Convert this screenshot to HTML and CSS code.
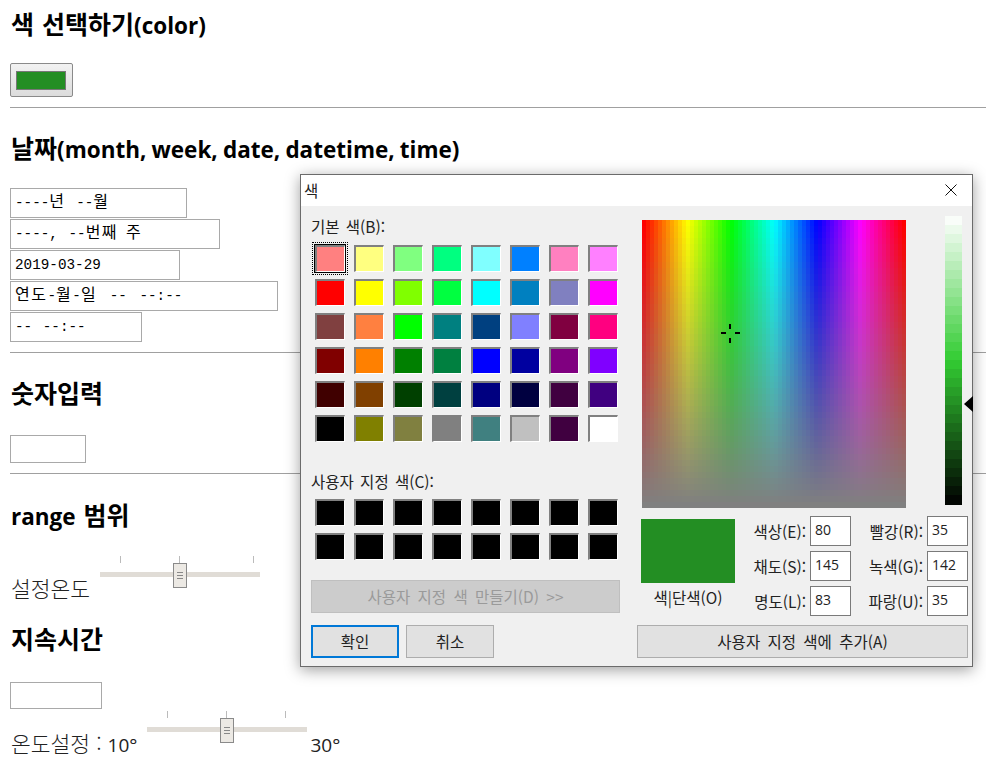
FILE: index.html
```html
<!DOCTYPE html>
<html lang="ko">
<head>
    <meta charset="UTF-8">
    <meta name="viewport" content="width=device-width, initial-scale=1.0">
    <title>input types</title>
    <link rel="stylesheet" href="styles.css">
</head>
<body>
    <h2 class="title title-first">색 선택하기<span class="en">(color)</span></h2>
    <button class="color-btn"><span class="color-btn-fill"></span></button>
    <hr>

    <h2 class="title title-dates">날짜<span class="en">(month, week, date, datetime, time)</span></h2>
    <div class="date-list">
        <div class="field month">----<span class="ko">년</span> --<span class="ko">월</span></div>
        <div class="field week">----, --<span class="ko">번째 주</span></div>
        <div class="field date">2019-03-29</div>
        <div class="field datetime"><span class="ko">연도</span>-<span class="ko">월</span>-<span class="ko">일</span> -- --:--</div>
        <div class="field time">-- --:--</div>
    </div>
    <hr>

    <h2 class="title">숫자입력</h2>
    <div class="field number"></div>
    <hr>

    <h2 class="title title-range"><span class="en">range</span> 범위</h2>
    <div class="range-row">
        <span class="range-label">설정온도</span>
        <div class="slider slider-a">
            <i class="tick t1"></i><i class="tick t2"></i><i class="tick t3"></i>
            <div class="track"></div>
            <div class="thumb"></div>
        </div>
    </div>

    <h2 class="title title-time">지속시간</h2>
    <div class="field duration"></div>
    <div class="range-row range-row-b">
        <span class="range-label">온도설정 : <span class="num">10°</span></span>
        <div class="slider slider-b">
            <i class="tick t1"></i><i class="tick t2"></i><i class="tick t3"></i>
            <div class="track"></div>
            <div class="thumb"></div>
        </div>
        <span class="range-label range-end num">30°</span>
    </div>

    <!-- windows color dialog, sits on top of the page -->
    <div class="dialog">
        <div class="dialog-title">
            <span>색</span>
            <svg class="close" width="12" height="12" viewBox="0 0 12 12"><path d="M0.5 0.5L11.5 11.5M11.5 0.5L0.5 11.5" stroke="#111" fill="none"/></svg>
        </div>
        <div class="dialog-body">
            <div class="col-left">
                <div class="dlg-label basic-label">기본 색(B):</div>
                <div class="swatches" id="basic-colors"></div>
                <div class="dlg-label custom-label">사용자 지정 색(C):</div>
                <div class="swatches custom" id="custom-colors"></div>
                <div class="dlg-btn disabled">사용자 지정 색 만들기(D) &gt;&gt;</div>
                <div class="btn-row">
                    <div class="dlg-btn primary">확인</div>
                    <div class="dlg-btn cancel">취소</div>
                </div>
            </div>
            <div class="col-right">
                <div class="picker-row">
                    <div class="spectrum">
                        <canvas id="spectrum" width="264" height="288"></canvas>
                        <svg class="cross" width="20" height="20" viewBox="0 0 20 20"><path d="M8 0h2v5H8zM8 14h2v5H8zM0 8h5v2H0zM14 8h5v2h-5z" fill="#000"/></svg>
                    </div>
                    <div class="lum">
                        <canvas id="lum" width="17" height="289"></canvas>
                        <svg class="lum-arrow" width="9" height="16" viewBox="0 0 9 16"><path d="M0 8L9 0V16Z" fill="#000"/></svg>
                    </div>
                </div>
                <div class="values-row">
                    <div class="preview-col">
                        <div class="preview"></div>
                        <div class="preview-label">색|단색(O)</div>
                    </div>
                    <div class="values">
                        <label class="value"><span>색상(E):</span><b>80</b></label>
                        <label class="value"><span>빨강(R):</span><b>35</b></label>
                        <label class="value"><span>채도(S):</span><b>145</b></label>
                        <label class="value"><span>녹색(G):</span><b>142</b></label>
                        <label class="value"><span>명도(L):</span><b>83</b></label>
                        <label class="value"><span>파랑(U):</span><b>35</b></label>
                    </div>
                </div>
                <div class="dlg-btn add">사용자 지정 색에 추가(A)</div>
            </div>
        </div>
    </div>

    <script src="script.js"></script>
</body>
</html>
```

FILE: styles.css
```css
body {
    margin: 0 0 0 10px;
    height: 767px;
    overflow: hidden;
    color: #000;
    background: #fff;
    font-family: "Noto Sans CJK KR", sans-serif;
}

hr {
    height: 1px;
    margin: 10px 0 0 0;
    border: 0;
    background: #a0a0a0;
}

.title {
    height: 30px;
    margin: 26px 0 26px 1px;
    font-size: 25px;
    line-height: 26px;
    font-weight: 700;
    word-spacing: 1px;
}

.title .en {
    font-family: "Open Sans", sans-serif;
    font-size: 22.5px;
    word-spacing: -0.7px;
}

.title-first { margin-top: 10px; margin-bottom: 23px; }
.title-dates { margin-bottom: 24px; }
.title-range { margin-top: 27px; margin-bottom: 25px; }
.title-time { margin-top: 22px; margin-bottom: 27px; }

/* color input */
.color-btn {
    display: flex;
    align-items: center;
    justify-content: center;
    width: 63px;
    height: 34px;
    padding: 0 1px 0 0;
    border: 1px solid #8a8a8a;
    border-radius: 2px;
    background: linear-gradient(#f2f2f2, #dcdcdc);
}

.color-btn-fill {
    width: 50px;
    height: 19px;
    border: 1px solid #777;
    box-sizing: border-box;
    background: #238e23;
}

/* text-like inputs */
.date-list {
    display: flex;
    flex-direction: column;
    align-items: flex-start;
    gap: 1px;
}

.field {
    box-sizing: border-box;
    height: 30px;
    padding-left: 4px;
    border: 1px solid #a9a9a9;
    font-family: "Liberation Mono", "Noto Sans CJK KR", monospace;
    font-size: 14.3px;
    line-height: 28px;
    word-spacing: 2px;
    white-space: pre;
}

.field .ko {
    font-family: "Noto Sans CJK KR", sans-serif;
    font-size: 16px;
    line-height: 20px;
    letter-spacing: 1.5px;
}

.month { width: 177px; }
.week { width: 210px; }
.date { width: 170px; }
.datetime { width: 268px; word-spacing: 4px; }
.time { width: 132px; }
.number { width: 76px; height: 28px; }
.duration { width: 92px; height: 27px; }

/* range inputs */
.range-row {
    display: flex;
    align-items: flex-start;
    height: 47px;
}

.range-row-b {
    height: 49px;
    margin-top: 2px;
}

.range-label {
    align-self: flex-end;
    margin-left: 1px;
    color: #222;
    font-size: 21.5px;
    font-weight: 300;
    line-height: 30px;
}

.num {
    font-family: "Open Sans", sans-serif;
    font-size: 19px;
    font-weight: 400;
}

.range-end { margin-left: 3px; }

.slider {
    position: relative;
    width: 160px;
    height: 33px;
    margin-left: 10px;
}

.track {
    position: absolute;
    left: 0;
    right: 0;
    top: 16px;
    height: 5px;
    background: #e0dcd6;
}

.thumb {
    position: absolute;
    left: 73px;
    top: 7px;
    box-sizing: border-box;
    width: 14px;
    height: 25px;
    border: 1px solid #8a8a8a;
    background: #ece9e4;
}

.thumb::after {
    content: "";
    position: absolute;
    left: 3px;
    top: 8px;
    width: 6px;
    height: 5px;
    border-top: 1px solid #888;
    border-bottom: 1px solid #888;
    background: linear-gradient(#888, #888) center / 100% 1px no-repeat;
}

.tick {
    position: absolute;
    top: 0;
    width: 1px;
    height: 7px;
    background: #bbb;
}

.slider-a .t1 { left: 20px; }
.slider-a .t2 { left: 79px; }
.slider-a .t3 { left: 153px; }
.slider-b .t1 { left: 20px; }
.slider-b .t2 { left: 79px; }
.slider-b .t3 { left: 138px; }

/* dialog */
.dialog {
    position: absolute;
    left: 300px;
    top: 174px;
    box-sizing: border-box;
    width: 673px;
    height: 493px;
    border: 1px solid #6b6b6b;
    background: #f0f0f0;
    box-shadow: 0 3px 14px rgba(0, 0, 0, 0.38);
    font-size: 15.5px;
    color: #222;
}

.dialog-title {
    display: flex;
    align-items: center;
    justify-content: space-between;
    box-sizing: border-box;
    height: 31px;
    padding: 0 15px 2px 3px;
    background: #fff;
}

.dialog-body {
    display: flex;
}

.col-left {
    width: 309px;
    margin-left: 10px;
}

.col-right {
    width: 331px;
    margin-left: 17px;
}

.dlg-label {
    height: 20px;
    line-height: 20px;
    word-spacing: 2px;
}

.basic-label { margin-top: 10px; }
.custom-label { margin-top: 29px; }

.swatches {
    display: grid;
    grid-template-columns: repeat(8, 30px);
    grid-auto-rows: 27px;
    gap: 7px 9px;
    margin: 9px 0 0 4px;
}

.swatches.custom { margin-top: 8px; }

.swatch {
    box-sizing: border-box;
    border-top: 2px solid #808080;
    border-left: 2px solid #808080;
    border-right: 1px solid #fff;
    border-bottom: 1px solid #fff;
}

.swatch.selected {
    box-shadow: 0 0 0 1px #000, 0 0 0 2px #f0f0f0;
    outline: 1px dotted #000;
    outline-offset: 2px;
}

.dlg-btn {
    box-sizing: border-box;
    height: 33px;
    border: 1px solid #adadad;
    background: #e1e1e1;
    text-align: center;
    line-height: 31px;
    word-spacing: 3px;
}

.disabled {
    margin-top: 20px;
    border-color: #bfbfbf;
    background: #cccccc;
    color: #9a9a9a;
}

.btn-row {
    display: flex;
    gap: 7px;
    margin-top: 12px;
}

.primary, .cancel { width: 88px; }

.primary {
    border: 2px solid #0078d7;
    line-height: 29px;
}

.picker-row {
    display: flex;
    height: 302px;
    padding-left: 5px;
}

.spectrum {
    position: relative;
    width: 264px;
    height: 288px;
    margin-top: 14px;
}

.spectrum canvas, .lum canvas { display: block; }

.cross {
    position: absolute;
    left: 79px;
    top: 104px;
}

.lum {
    position: relative;
    width: 17px;
    height: 289px;
    margin: 10px 0 0 39px;
}

.lum-arrow {
    position: absolute;
    left: 19px;
    top: 180px;
}

.values-row {
    display: flex;
    margin-top: 8px;
}

.preview-col {
    width: 94px;
    margin-left: 4px;
}

.preview {
    height: 64px;
    margin-top: 3px;
    background: #238e23;
}

.preview-label {
    margin-top: 4px;
    text-align: center;
    line-height: 20px;
}

.values {
    display: grid;
    grid-template-columns: 106px 106px;
    grid-auto-rows: 30px;
    gap: 5px 11px;
    margin-left: 10px;
}

.value {
    display: flex;
    align-items: center;
    justify-content: flex-end;
    gap: 4px;
    white-space: nowrap;
}

.value b {
    box-sizing: border-box;
    width: 41px;
    height: 30px;
    padding-left: 4px;
    border: 1px solid #7a7a7a;
    background: #fff;
    font-family: "Open Sans", sans-serif;
    font-size: 14px;
    font-weight: 400;
    line-height: 26px;
}

.add { margin-top: 9px; }
```

FILE: script.js
```js
// classic windows palette, row by row
const basicColors = [
    '#ff8080', '#ffff80', '#80ff80', '#00ff80', '#80ffff', '#0080ff', '#ff80c0', '#ff80ff',
    '#ff0000', '#ffff00', '#80ff00', '#00ff40', '#00ffff', '#0080c0', '#8080c0', '#ff00ff',
    '#804040', '#ff8040', '#00ff00', '#008080', '#004080', '#8080ff', '#800040', '#ff0080',
    '#800000', '#ff8000', '#008000', '#008040', '#0000ff', '#0000a0', '#800080', '#8000ff',
    '#400000', '#804000', '#004000', '#004040', '#000080', '#000040', '#400040', '#400080',
    '#000000', '#808000', '#808040', '#808080', '#408080', '#c0c0c0', '#400040', '#ffffff'
];

function addSwatches(containerId, colors) {
    const container = document.getElementById(containerId);
    colors.forEach((color, index) => {
        const swatch = document.createElement('div');
        swatch.className = 'swatch';
        swatch.style.backgroundColor = color;
        if (containerId === 'basic-colors' && index === 0) {
            swatch.classList.add('selected');
        }
        container.appendChild(swatch);
    });
}

addSwatches('basic-colors', basicColors);
addSwatches('custom-colors', new Array(16).fill('#000000'));

// hue across, saturation down, in small blocks like the real dialog
const spectrum = document.getElementById('spectrum').getContext('2d');
const blockW = 4;
const blockH = 6;
for (let x = 0; x < 264; x += blockW) {
    for (let y = 0; y < 288; y += blockH) {
        const hue = 360 * x / 260;
        const sat = 100 * (1 - y / 282);
        spectrum.fillStyle = `hsl(${hue}, ${sat}%, 50%)`;
        spectrum.fillRect(x, y, blockW, blockH);
    }
}

// lightness bar for the picked hue
const lum = document.getElementById('lum').getContext('2d');
const bands = 32;
for (let i = 0; i < bands; i++) {
    const light = 100 * (1 - (i + 0.5) / bands);
    lum.fillStyle = `hsl(120, 60%, ${light}%)`;
    lum.fillRect(0, Math.floor(i * 289 / bands), 17, 10);
}
```
